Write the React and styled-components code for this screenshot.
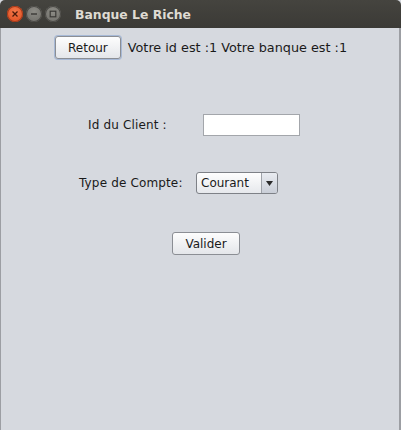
import React from "react"
import styled, { createGlobalStyle } from "styled-components"

const GlobalStyle = createGlobalStyle`
  html, body {
    margin: 0;
    padding: 0;
    background: #3c3b37;
  }
  body {
    font-family: "DejaVu Sans", "Noto Sans", sans-serif;
  }
`

const Window = styled.div`
  width: 401px;
  height: 430px;
  display: flex;
  flex-direction: column;
  background: #d6d9df;
  overflow: hidden;
`

const TitleBar = styled.div`
  height: 28px;
  flex: none;
  display: flex;
  align-items: center;
  padding-left: 7px;
  gap: 3px;
  background: linear-gradient(#45443f, #3b3a36);
  border-radius: 5px 5px 0 0;
`

const WinButton = styled.div`
  width: 16px;
  height: 16px;
  border-radius: 50%;
  display: flex;
  align-items: center;
  justify-content: center;
  background: ${p => (p.$close ? "radial-gradient(circle at 50% 35%, #f3784a, #dd4a1c)" : "radial-gradient(circle at 50% 35%, #8d8c86, #6c6b66)")};
  box-shadow: inset 0 0 0 1px ${p => (p.$close ? "#a3391a" : "#4a4945")};
`

const Title = styled.div`
  margin-left: 11px;
  font-family: "DejaVu Sans", sans-serif;
  font-weight: bold;
  font-size: 12.4px;
  color: #dfdbd2;
`

const Content = styled.div`
  flex: 1;
  display: flex;
  flex-direction: column;
  border-left: 1px solid #9c9ea3;
  border-right: 2px solid #9c9ea3;
`

const TopRow = styled.div`
  display: flex;
  align-items: center;
  padding: 8px 0 0 54px;
  gap: 7px;
`

const FormRow = styled.div`
  display: flex;
  align-items: center;
  padding-left: ${p => p.$left}px;
  margin-top: ${p => p.$top}px;
`

const Label = styled.span`
  font-size: 12px;
  color: #1a1a1a;
  width: ${p => (p.$width ? `${p.$width}px` : "auto")};
  letter-spacing: 0.15px;
`

const Text = styled.span`
  font-size: 12.8px;
  color: #1a1a1a;
`

const Button = styled.button`
  height: 23px;
  padding: 0 12px;
  font-family: "DejaVu Sans", sans-serif;
  font-size: 12px;
  color: #1a1a1a;
  background: linear-gradient(#fdfdfd, #e4e6ea);
  border: 1px solid #8b8e94;
  border-radius: 3px;
  box-shadow: ${p => (p.$focused ? "0 0 0 1px #a7b9d6" : "none")};
`

const TextField = styled.div`
  width: 95px;
  height: 20px;
  background: #fff;
  border: 1px solid #a3a6ab;
`

const Combo = styled.div`
  display: flex;
  align-items: center;
  width: 80px;
  height: 20px;
  border: 1px solid #7e8187;
  border-radius: 3px;
  background: linear-gradient(#fefefe, #e6e8ec);
  overflow: hidden;
`

const ComboValue = styled.span`
  flex: 1;
  font-size: 12px;
  color: #1a1a1a;
  padding-left: 4px;
`

const ComboArrow = styled.div`
  width: 15px;
  height: 100%;
  display: flex;
  align-items: center;
  justify-content: center;
  border-left: 1px solid #9ea2a9;
  background: linear-gradient(#e9ecf1, #c9ced7);
`

const ButtonRow = styled.div`
  display: flex;
  justify-content: center;
  margin-top: 38px;
  padding-left: 12px;
`

export default function App() {
  return (
    <>
      <GlobalStyle />
      <Window>
        <TitleBar>
          <WinButton $close>
            <svg width="8" height="8" viewBox="0 0 8 8">
              <path d="M1.5 1.5 L6.5 6.5 M6.5 1.5 L1.5 6.5" stroke="#4a1a0a" strokeWidth="1.3" />
            </svg>
          </WinButton>
          <WinButton>
            <svg width="8" height="8" viewBox="0 0 8 8">
              <path d="M1 4 H7" stroke="#3a3936" strokeWidth="1.4" />
            </svg>
          </WinButton>
          <WinButton>
            <svg width="8" height="8" viewBox="0 0 8 8">
              <rect x="1.2" y="1.2" width="5.6" height="5.6" fill="none" stroke="#3a3936" strokeWidth="1.2" />
            </svg>
          </WinButton>
          <Title>Banque Le Riche</Title>
        </TitleBar>
        <Content>
          <TopRow>
            <Button $focused>Retour</Button>
            <Text>Votre id est :1 Votre banque est :1</Text>
          </TopRow>
          <FormRow $left={87} $top={55}>
            <Label $width={115}>Id du Client :</Label>
            <TextField />
          </FormRow>
          <FormRow $left={78} $top={36}>
            <Label $width={117}>Type de Compte:</Label>
            <Combo>
              <ComboValue>Courant</ComboValue>
              <ComboArrow>
                <svg width="7" height="5" viewBox="0 0 7 5">
                  <path d="M0 0 H7 L3.5 5 Z" fill="#2a2a2a" />
                </svg>
              </ComboArrow>
            </Combo>
          </FormRow>
          <ButtonRow>
            <Button>Valider</Button>
          </ButtonRow>
        </Content>
      </Window>
    </>
  )
}
